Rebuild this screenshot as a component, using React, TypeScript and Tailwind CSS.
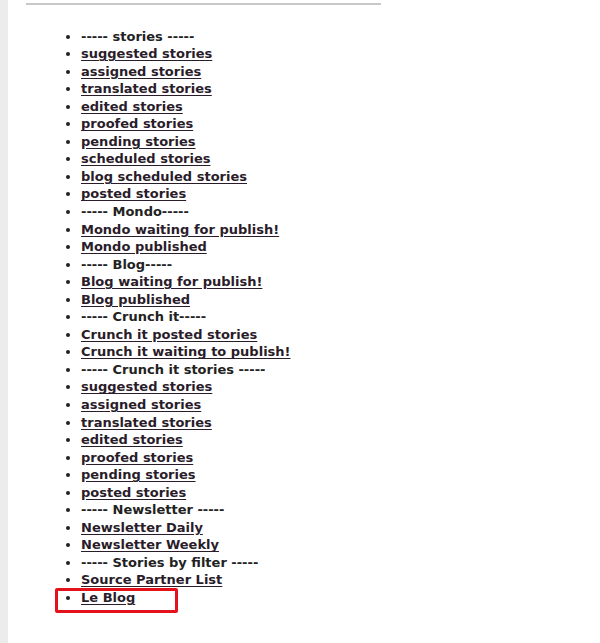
import React from "react";

const items: { t: string; link: boolean }[] = [
  { t: "----- stories -----", link: false },
  { t: "suggested stories", link: true },
  { t: "assigned stories", link: true },
  { t: "translated stories", link: true },
  { t: "edited stories", link: true },
  { t: "proofed stories", link: true },
  { t: "pending stories", link: true },
  { t: "scheduled stories", link: true },
  { t: "blog scheduled stories", link: true },
  { t: "posted stories", link: true },
  { t: "----- Mondo-----", link: false },
  { t: "Mondo waiting for publish!", link: true },
  { t: "Mondo published", link: true },
  { t: "----- Blog-----", link: false },
  { t: "Blog waiting for publish!", link: true },
  { t: "Blog published", link: true },
  { t: "----- Crunch it-----", link: false },
  { t: "Crunch it posted stories", link: true },
  { t: "Crunch it waiting to publish!", link: true },
  { t: "----- Crunch it stories -----", link: false },
  { t: "suggested stories", link: true },
  { t: "assigned stories", link: true },
  { t: "translated stories", link: true },
  { t: "edited stories", link: true },
  { t: "proofed stories", link: true },
  { t: "pending stories", link: true },
  { t: "posted stories", link: true },
  { t: "----- Newsletter -----", link: false },
  { t: "Newsletter Daily", link: true },
  { t: "Newsletter Weekly", link: true },
  { t: "----- Stories by filter -----", link: false },
  { t: "Source Partner List", link: true },
  { t: "Le Blog", link: true },
];

export default function App() {
  return (
    <div className="w-[600px] h-[643px] bg-white flex overflow-hidden">
      <div className="w-[8px] h-full bg-[#ececec]" />
      <div className="flex-1 relative">
        <div className="ml-[18px] mt-[3px] w-[355px] h-[2px] bg-[#c8c8c8]" />
        <ul
          className="list-disc mt-[22.5px] pl-[73px] text-[13px] font-bold leading-[17.55px] text-[#222]"
          style={{ fontFamily: '"DejaVu Sans", Verdana, sans-serif' }}
        >
          {items.map((it, i) => (
            <li key={i}>
              {it.link ? (
                <a href="#" className="underline underline-offset-[2px] text-[#2a1c2a]">
                  {it.t}
                </a>
              ) : (
                <span>{it.t}</span>
              )}
            </li>
          ))}
        </ul>
        <div className="absolute left-[47px] top-[588px] w-[123px] h-[25px] border-[3px] border-[#e4121b] rounded-[2px]" />
      </div>
    </div>
  );
}
